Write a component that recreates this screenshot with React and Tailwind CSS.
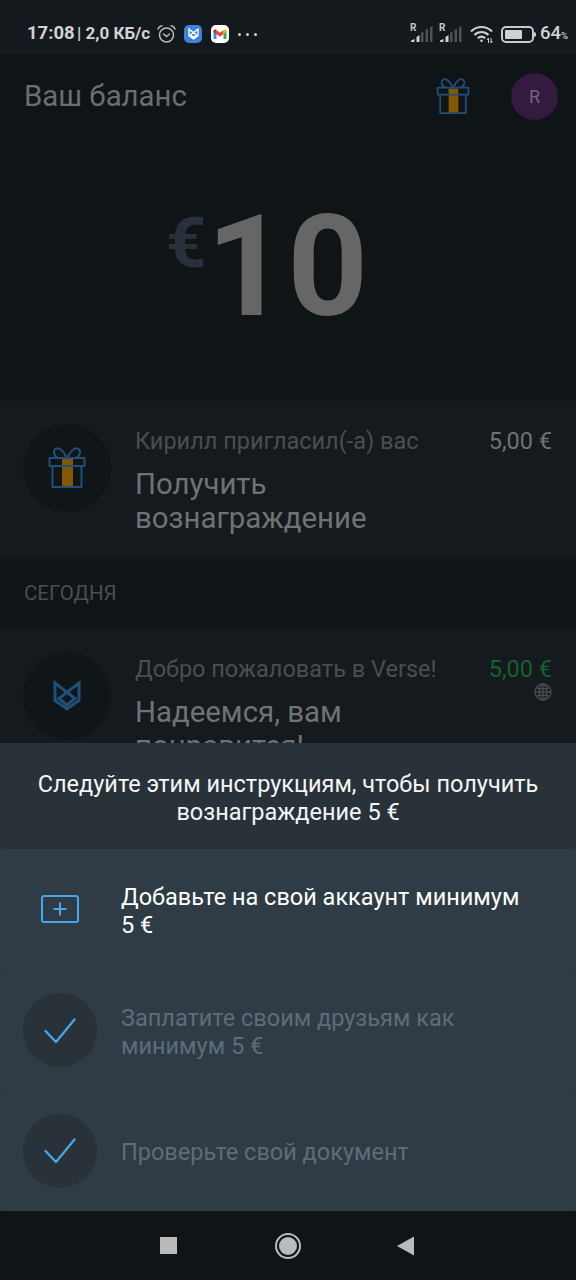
import React from 'react';

const GiftIcon = ({ className }) => (
  <svg className={className} viewBox="0 0 38 42" fill="none" stroke="#1f4e76" strokeWidth="2" strokeLinejoin="round">
    <rect x="14" y="12" width="11" height="28" fill="#835900" stroke="none" />
    <rect x="1.5" y="11" width="35" height="8" />
    <path d="M4.5 19V40H33.5V19" />
    <path d="M19 11C16 4.500 11.500 0.500 8.500 1.500C4.500 3 5.500 9.500 10.500 11" />
    <path d="M19 11C22 4.500 26.500 0.500 29.500 1.500C33.500 3 32.500 9.500 27.500 11" />
  </svg>
);

const VerseIcon = ({ className, strokeWidth = 3 }) => (
  <svg className={className} viewBox="0 0 28 32" fill="none" stroke="currentColor" strokeWidth={strokeWidth}>
    <path d="M2 3.500L22 19L14 25.500L6 19L26 3.500V21L14 29.500L2 21Z" transform="translate(0 -0.500)" />
  </svg>
);

const AlarmIcon = () => (
  <svg className="h-5 w-[19px]" viewBox="0 0 19 20" fill="none" stroke="#b9babb" strokeWidth="1.5" strokeLinecap="round">
    <circle cx="9.5" cy="11" r="7" />
    <path d="M6.500 10L9.500 12.500L12.500 10" />
    <path d="M1 5C1.500 3.500 3 2.200 4.800 1.800M18 5C17.500 3.500 16 2.200 14.200 1.800" />
  </svg>
);

const GmailIcon = () => (
  <div className="flex h-[18px] w-[18px] items-center justify-center rounded-[5px] bg-white">
    <svg className="h-[11px] w-[14px]" viewBox="0 0 14 11">
      <path d="M0.500 1.500V10H3.500V4Z" fill="#4285f4" />
      <path d="M13.500 1.500V10H10.500V4Z" fill="#34a853" />
      <path d="M3.500 1L7 3.800L10.500 1V5L7 7.700L3.500 5Z" fill="#ea4335" />
      <path d="M0.500 2.500C0.500 0.500 2.300 0 3.500 1V5L0.500 2.800Z" fill="#c5221f" />
      <path d="M13.500 2.500C13.500 0.500 11.700 0 10.500 1V5L13.500 2.800Z" fill="#fbbc04" />
    </svg>
  </div>
);

const SignalIcon = () => (
  <div className="relative h-[18px] w-[23px]">
    <span className="absolute -top-[2px] left-0 text-[10px] leading-[10px] font-bold text-[#c4c4c5]">R</span>
    <svg className="h-full w-full" viewBox="0 0 23 18">
      <path d="M1 17V15.500L4.500 14V17Z" fill="#d0d0d1" />
      <path d="M6.500 17V12L9.500 10V17Z" fill="#d0d0d1" />
      <path d="M11 17V8L13.500 6.500V17ZM15.500 17V5L18 3.500V17ZM20 17V2.500L22.500 1V17Z" fill="#505355" />
    </svg>
  </div>
);

const WifiIcon = () => (
  <svg className="h-[19px] w-[23px]" viewBox="0 0 23 19" fill="none" stroke="#d0d0d1" strokeWidth="2.2">
    <path d="M1 6.500C7 0.500 16 0.500 22 6.500" />
    <path d="M4.500 10C8.500 6 14.500 6 18.500 10" />
    <path d="M7.800 13.300C10.300 11 12.700 11 15.200 13.300" />
    <circle cx="11.5" cy="15.8" r="1.3" fill="#d0d0d1" stroke="none" />
    <path d="M18.500 18V13L16.800 15M21 13V18L22.700 16" strokeWidth="1" />
  </svg>
);

const BatteryIcon = () => (
  <div className="flex items-center">
    <div className="h-[17px] w-[33px] rounded-[5px] border-2 border-[#c9c9ca] p-[2px]">
      <div className="h-full w-[17px] rounded-[1px] bg-[#d0d0d1]" />
    </div>
    <div className="h-[5px] w-[2px] rounded-r bg-[#c9c9ca]" />
  </div>
);

const GlobeIcon = () => (
  <svg className="h-[18px] w-[18px]" viewBox="0 0 18 18" fill="none" stroke="#4b4e50" strokeWidth="1.3">
    <circle cx="9" cy="9" r="8" />
    <ellipse cx="9" cy="9" rx="3.8" ry="8" />
    <path d="M9 1V17M1 9H17M2.500 4.800C6.500 6.200 11.500 6.200 15.500 4.800M2.500 13.200C6.500 11.800 11.500 11.800 15.500 13.200" />
  </svg>
);

const AddMoneyIcon = () => (
  <svg className="h-7 w-[38px]" viewBox="0 0 38 28" fill="none" stroke="#46a5ec" strokeWidth="2">
    <rect x="1" y="1" width="36" height="26" rx="2" />
    <path d="M19 7.500V20.500M12.500 14H25.500" />
  </svg>
);

const CheckIcon = () => (
  <svg className="h-[25px] w-8" viewBox="0 0 32 25" fill="none" stroke="#46a5ec" strokeWidth="2.3" strokeLinecap="round" strokeLinejoin="round">
    <path d="M1.500 13L12 24L30.500 1.500" />
  </svg>
);

const StatusBar = () => (
  <div className="flex h-[54px] shrink-0 items-center bg-[#14191d] pt-[14px] pr-2 pl-[27px] text-[#d2d2d3]">
    <span className="w-[50px] text-[18.5px] font-bold">17:08</span>
    <span className="w-[80px] text-[17px] font-bold whitespace-nowrap">| 2,0 КБ/с</span>
    <div className="flex flex-1 items-center">
      <AlarmIcon />
      <div className="ml-2 flex h-[18px] w-[18px] items-center justify-center rounded-[5px] bg-[#3b82dc] text-white">
        <VerseIcon className="h-3 w-[11px]" strokeWidth={3.5} />
      </div>
      <div className="ml-[9px]"><GmailIcon /></div>
      <div className="ml-[9px] flex gap-[5px]">
        <span className="h-[3px] w-[3px] rounded-full bg-[#d2d2d3]" />
        <span className="h-[3px] w-[3px] rounded-full bg-[#d2d2d3]" />
        <span className="h-[3px] w-[3px] rounded-full bg-[#d2d2d3]" />
      </div>
    </div>
    <div className="flex items-center">
      <SignalIcon />
      <div className="ml-[6px]"><SignalIcon /></div>
      <div className="ml-2"><WifiIcon /></div>
      <div className="ml-2"><BatteryIcon /></div>
      <span className="ml-1 text-[18.5px] font-medium">64</span>
      <span className="pt-[5px] text-[9.5px] font-medium">%</span>
    </div>
  </div>
);

const Activity = ({ icon, label, title, amount, amountColor, extra }) => (
  <div className="flex bg-[#141a1e] pt-[23px] pr-6 pl-[23px]">
    <div className="flex h-[88px] w-[88px] shrink-0 items-center justify-center rounded-full bg-[#101517]">
      {icon}
    </div>
    <div className="ml-6 flex-1">
      <div className="flex justify-between pt-[3px] text-[23.5px] leading-7">
        <span className="whitespace-nowrap text-[#4b4e50]">{label}</span>
        <span className={`whitespace-nowrap ${amountColor}`}>{amount}</span>
      </div>
      <div className="flex">
        <h2 className="w-[250px] pt-3 text-[29.4px] leading-[34px] text-[#707273]">{title}</h2>
        <div className="ml-auto">{extra}</div>
      </div>
    </div>
  </div>
);

const Step = ({ icon, text, active }) => (
  <div className="flex flex-1 items-center rounded-[3px] bg-[#2f3c45] pl-[23px]">
    <div className={`flex h-[74px] w-[74px] items-center justify-center rounded-full ${active ? '' : 'bg-[#283238]'}`}>
      {icon}
    </div>
    <p className={`ml-6 w-[410px] pt-[3px] text-[23.5px] leading-7 ${active ? 'text-white' : 'text-[#5e6c7a]'}`}>{text}</p>
  </div>
);

const App = () => {
  return (
    <div className="flex h-[1280px] w-[576px] flex-col overflow-hidden bg-[#0f1416] font-['Roboto',sans-serif]">
      <StatusBar />

      {/* Dimmed home screen */}
      <main className="h-[689px] shrink-0 overflow-hidden">
        <header className="flex h-[84px] items-center pr-[18px] pl-6">
          <h1 className="flex-1 text-[29.4px] text-[#6b6d6e]">Ваш баланс</h1>
          <GiftIcon className="mr-[41px] h-[37px] w-[34px]" />
          <div className="flex h-[47px] w-[47px] items-center justify-center rounded-full bg-[#321b3e] text-[18px] text-[#716579]">R</div>
        </header>
        <div className="flex h-[263px] items-start justify-center pr-[42px] pt-[46px] font-bold">
          <span className="mt-[18px] text-[70.5px] leading-[82px] text-[#2a303b]">€</span>
          <span className="text-[141px] leading-[165px] text-[#666666]">10</span>
        </div>

        <div className="h-[156px] bg-[#141a1e]">
          <Activity
            icon={<GiftIcon className="h-[42px] w-[38px]" />}
            label="Кирилл пригласил(-а) вас"
            title="Получить вознаграждение"
            amount="5,00 €"
            amountColor="text-[#707273]"
          />
        </div>
        <div className="flex h-[72px] items-center pl-6 text-[20.5px] text-[#4b4e50]">СЕГОДНЯ</div>
        <Activity
          icon={<VerseIcon className="h-8 w-7 text-[#1f5078]" />}
          label="Добро пожаловать в Verse!"
          title="Надеемся, вам понравится!"
          amount="5,00 €"
          amountColor="text-[#17602f]"
          extra={<GlobeIcon />}
        />
      </main>

      {/* Reward instructions */}
      <section className="flex h-[468px] shrink-0 flex-col bg-[#283238]">
        <h2 className="flex h-[106px] items-center justify-center px-8 pt-1 text-center text-[23.5px] leading-7 text-[#f5f6f6]">
          Следуйте этим инструкциям, чтобы получить вознаграждение 5 €
        </h2>
        <Step active icon={<AddMoneyIcon />} text="Добавьте на свой аккаунт минимум 5 €" />
        <Step icon={<CheckIcon />} text="Заплатите своим друзьям как минимум 5 €" />
        <Step icon={<CheckIcon />} text="Проверьте свой документ" />
      </section>

      {/* Android navigation */}
      <nav className="flex h-[69px] shrink-0 items-center bg-[#0f1417] pl-[160px]">
        <div className="h-[17px] w-[17px] bg-[#bababb]" />
        <div className="ml-[98px] flex h-[26px] w-[26px] items-center justify-center rounded-full border-2 border-[#bababb]">
          <div className="h-[18px] w-[18px] rounded-full bg-[#bababb]" />
        </div>
        <svg className="ml-24 h-5 w-[17px]" viewBox="0 0 17 20" fill="#bababb">
          <path d="M0 10L17 0.500V19.500Z" />
        </svg>
      </nav>
    </div>
  );
};

export default App;
